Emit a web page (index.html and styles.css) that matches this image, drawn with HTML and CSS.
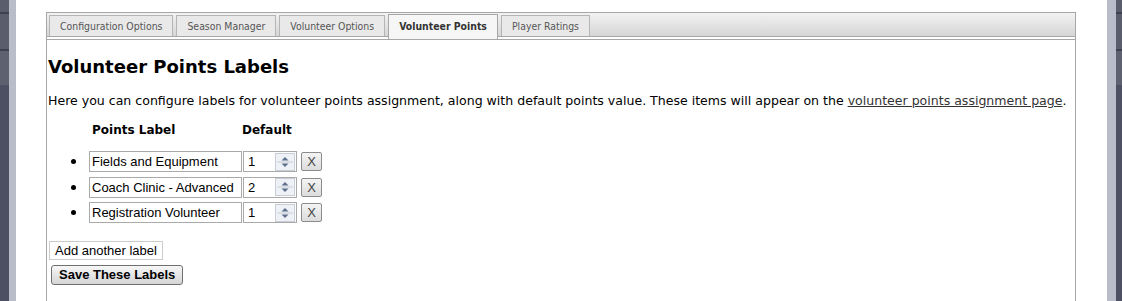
FILE: index.html
```html
<!DOCTYPE html>
<html>
<head>
<meta charset="utf-8">
<link rel="stylesheet" href="styles.css">
</head>
<body>
<div class="page">
  <div class="side side-left"><div class="dark"></div><div class="light"></div></div>
  <main class="main">
    <div class="tabs">
      <ul class="tab-bar">
        <li class="tab">Configuration Options</li>
        <li class="tab">Season Manager</li>
        <li class="tab">Volunteer Options</li>
        <li class="tab active">Volunteer Points</li>
        <li class="tab">Player Ratings</li>
      </ul>
      <div class="panel">
        <h2 class="title">Volunteer Points Labels</h2>
        <p class="intro">Here you can configure labels for volunteer points assignment, along with default points value. These items will appear on the <a href="#" class="link">volunteer points assignment page</a>.</p>
        <div class="heads"><span class="h-label">Points Label</span><span class="h-default">Default</span></div>
        <ul class="rows">
          <li class="row"><span class="dot"></span><input class="txt" type="text" value="Fields and Equipment"><span class="num"><span class="num-val">1</span><span class="spin"><svg width="20" height="18" viewBox="0 0 20 18"><rect x="0.5" y="0.5" width="19" height="17" fill="#eef1f5" stroke="#c9ced6"/><line x1="2" y1="9" x2="18" y2="9" stroke="#c9ced6"/><path d="M6.5 7.5 L10 4 L13.5 7.5 Z" fill="#5f708c"/><path d="M6.5 10.5 L10 14 L13.5 10.5 Z" fill="#5f708c"/></svg></span></span><button class="del">X</button></li>
          <li class="row"><span class="dot"></span><input class="txt" type="text" value="Coach Clinic - Advanced"><span class="num"><span class="num-val">2</span><span class="spin"><svg width="20" height="18" viewBox="0 0 20 18"><rect x="0.5" y="0.5" width="19" height="17" fill="#eef1f5" stroke="#c9ced6"/><line x1="2" y1="9" x2="18" y2="9" stroke="#c9ced6"/><path d="M6.5 7.5 L10 4 L13.5 7.5 Z" fill="#5f708c"/><path d="M6.5 10.5 L10 14 L13.5 10.5 Z" fill="#5f708c"/></svg></span></span><button class="del">X</button></li>
          <li class="row"><span class="dot"></span><input class="txt" type="text" value="Registration Volunteer"><span class="num"><span class="num-val">1</span><span class="spin"><svg width="20" height="18" viewBox="0 0 20 18"><rect x="0.5" y="0.5" width="19" height="17" fill="#eef1f5" stroke="#c9ced6"/><line x1="2" y1="9" x2="18" y2="9" stroke="#c9ced6"/><path d="M6.5 7.5 L10 4 L13.5 7.5 Z" fill="#5f708c"/><path d="M6.5 10.5 L10 14 L13.5 10.5 Z" fill="#5f708c"/></svg></span></span><button class="del">X</button></li>
        </ul>
        <div class="actions">
          <button class="add">Add another label</button>
          <button class="save">Save These Labels</button>
        </div>
      </div>
    </div>
  </main>
  <div class="side side-right"><div class="light"></div><div class="dark"></div></div>
</div>
</body>
</html>
```
FILE: styles.css
```css
html, body { margin: 0; padding: 0; background: #fff; }
.page { display: flex; width: 1122px; height: 301px; overflow: hidden; }
.side { display: flex; height: 301px; }
.side .dark { width: 9px; background: linear-gradient(#5a5e6c 0, #5a5e6c 12px, #3e4250 12px, #3e4250 14px, #5a5e6c 14px, #5a5e6c 49px, #3e4250 49px, #3e4250 51px, #5d6170 51px, #5d6170 85px, #4c5062 85px, #4c5062 100%); }
.side .light { width: 7px; background: #b9bdc9; }
.side-right .light { width: 9px; }
.side-right .dark { width: 6px; }
.main { flex: 1; padding: 12px 0 0 30px; }
.tabs { box-sizing: border-box; width: 1030px; height: 289px; border: 1px solid #a7a7a7; border-bottom: none; }
.tab-bar { list-style: none; margin: 0; padding: 2px 2px 0 2px; display: flex; gap: 3px; height: 21px; background: linear-gradient(#f2f2f2, #d6d6d6); border-bottom: 1px solid #a7a7a7; }
.tab { box-sizing: border-box; height: 21px; padding: 0 10px; border: 1px solid #b5b5b5; border-bottom: none; background: #e9e9e9; font-family: "DejaVu Sans Condensed", "DejaVu Sans", sans-serif; font-size: 10.4px; color: #555; line-height: 20px; white-space: nowrap; }
.tab.active { background: #f6f6f6; font-weight: bold; color: #333; height: 25px; margin-top: -1px; margin-bottom: -3px; border-color: #a7a7a7; line-height: 22px; position: relative; }
.panel { margin-top: 2px; border-top: 1px solid #a7a7a7; padding: 0 0 0 1px; }
.title { margin: 16px 0 0 0; font-family: "DejaVu Sans", Verdana, sans-serif; font-weight: bold; font-size: 18px; color: #000; line-height: 22px; }
.intro { margin: 15px 0 0 0; font-family: "DejaVu Sans", Verdana, sans-serif; font-size: 12.56px; color: #000; line-height: 16px; white-space: nowrap; }
.link { color: #333; text-decoration: underline; }
.heads { margin-top: 13px; display: flex; font-family: "DejaVu Sans", Verdana, sans-serif; font-weight: bold; font-size: 12px; line-height: 16px; }
.h-label { margin-left: 44px; width: 150px; }
.rows { margin: 13px 0 0 0; padding: 0 0 0 22px; list-style: none; }
.row { display: flex; align-items: flex-start; height: 21px; margin-bottom: 4.5px; }
.dot { width: 5px; height: 5px; border-radius: 50%; background: #000; margin: 8px 13px 0 1px; flex: none; }
.txt { box-sizing: border-box; width: 153px; height: 21px; margin: 0; border: 1px solid #aaa; padding: 0 2px; font-family: "Liberation Sans", Arial, sans-serif; font-size: 13px; color: #000; }
.num { display: inline-flex; align-items: center; justify-content: space-between; box-sizing: border-box; width: 54px; height: 21px; margin-left: 1px; border: 1px solid #aaa; padding: 0 1px 0 4px; font-family: "Liberation Sans", Arial, sans-serif; font-size: 13px; }
.spin { display: flex; }
.del { box-sizing: border-box; width: 21px; height: 19px; margin: 1px 0 0 4px; padding: 0; border: 1px solid #8c8c8c; border-radius: 2px; background: linear-gradient(#f4f4f4, #dcdcdc); font-family: "Liberation Sans", Arial, sans-serif; font-size: 13px; color: #444; }
.actions { margin: 17.5px 0 0 1px; display: flex; flex-direction: column; align-items: flex-start; gap: 5px; }
.add { box-sizing: border-box; height: 19px; padding: 0 5px; border: 1px solid #ccc; background: #fff; font-family: "Liberation Sans", Arial, sans-serif; font-size: 13px; color: #000; }
.save { box-sizing: border-box; height: 20px; margin-left: 2px; padding: 0 7px; border: 1px solid #707070; border-radius: 3px; background: linear-gradient(#f7f7f7, #d5d5d5); font-family: "Liberation Sans", Arial, sans-serif; font-weight: bold; font-size: 13px; color: #000; }
```
